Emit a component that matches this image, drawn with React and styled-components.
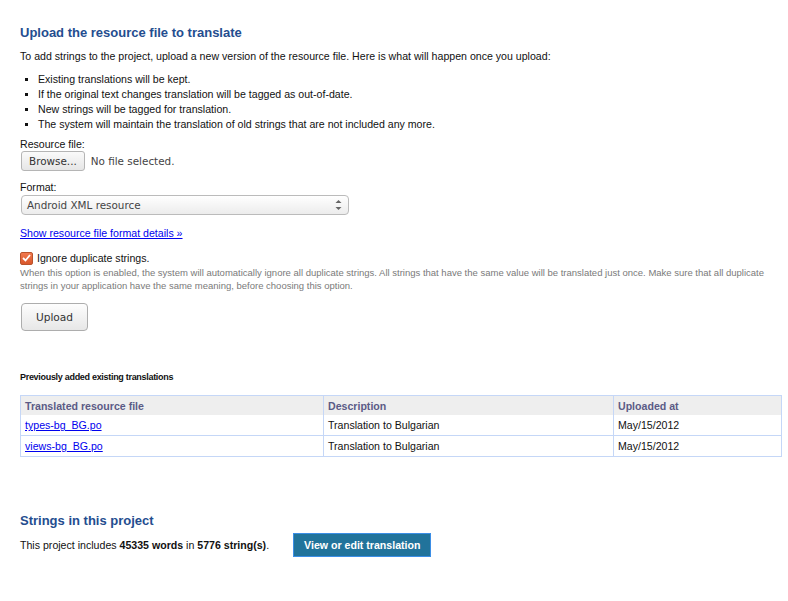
import React from 'react';
import styled, { createGlobalStyle } from 'styled-components';

const GlobalStyle = createGlobalStyle`
  body {
    margin: 0;
    background: #fff;
    font-family: "Liberation Sans", Arial, sans-serif;
    font-size: 10.6px;
    color: #111;
  }
`;

const rows = [
  { file: 'types-bg_BG.po', description: 'Translation to Bulgarian', date: 'May/15/2012' },
  { file: 'views-bg_BG.po', description: 'Translation to Bulgarian', date: 'May/15/2012' },
];

export default function App() {
  return (
    <Page>
      <GlobalStyle />
      <H2>Upload the resource file to translate</H2>
      <Intro>
        To add strings to the project, upload a new version of the resource file. Here is what will happen once you upload:
      </Intro>
      <List>
        <li>Existing translations will be kept.</li>
        <li>If the original text changes translation will be tagged as out-of-date.</li>
        <li>New strings will be tagged for translation.</li>
        <li>The system will maintain the translation of old strings that are not included any more.</li>
      </List>

      <Field>
        <Label>Resource file:</Label>
        <FileRow>
          <SmallButton>Browse...</SmallButton>
          <FileName>No file selected.</FileName>
        </FileRow>
      </Field>

      <Field>
        <Label>Format:</Label>
        <Select>
          <span>Android XML resource</span>
          <Arrows>
            <svg width="7" height="12" viewBox="0 0 7 12">
              <path d="M0.5 4 L3.5 1 L6.5 4 Z" fill="#666" />
              <path d="M0.5 8 L3.5 11 L6.5 8 Z" fill="#666" />
            </svg>
          </Arrows>
        </Select>
      </Field>

      <DetailsLink href="#">Show resource file format details »</DetailsLink>

      <CheckRow>
        <CheckBox>
          <svg width="9" height="8" viewBox="0 0 9 8">
            <path d="M1 4 L3.5 6.5 L8 1" stroke="#fff" strokeWidth="1.8" fill="none" />
          </svg>
        </CheckBox>
        <span>Ignore duplicate strings.</span>
      </CheckRow>
      <Help>
        When this option is enabled, the system will automatically ignore all duplicate strings. All strings that have the same value will be translated just once. Make sure that all duplicate strings in your application have the same meaning, before choosing this option.
      </Help>

      <UploadButton>Upload</UploadButton>

      <H4>Previously added existing translations</H4>
      <Table>
        <colgroup>
          <col style={{ width: 303 }} />
          <col style={{ width: 290 }} />
          <col />
        </colgroup>
        <thead>
          <tr>
            <Th>Translated resource file</Th>
            <Th>Description</Th>
            <Th>Uploaded at</Th>
          </tr>
        </thead>
        <tbody>
          {rows.map(r => (
            <tr key={r.file}>
              <Td><FileLink href="#">{r.file}</FileLink></Td>
              <Td>{r.description}</Td>
              <Td>{r.date}</Td>
            </tr>
          ))}
        </tbody>
      </Table>

      <H2 $top={55}>Strings in this project</H2>
      <SummaryRow>
        <span>
          This project includes <b>45335 words</b> in <b>5776 string(s)</b>.
        </span>
        <PrimaryButton>View or edit translation</PrimaryButton>
      </SummaryRow>
    </Page>
  );
}

const Page = styled.div`
  padding: 24px 0 40px 20px;
`;

const H2 = styled.h2`
  margin: ${p => p.$top || 0}px 0 0;
  color: #244d8f;
  font-size: 13px;
  font-weight: bold;
  line-height: 18px;
`;

const Intro = styled.p`
  margin: 7px 0 0;
  line-height: 14px;
`;

const List = styled.ul`
  margin: 9px 0 0;
  padding: 0 0 0 18px;
  list-style: square;
  line-height: 15px;

  li::marker {
    font-size: 10px;
  }
`;

const Field = styled.div`
  margin-top: 6px;
  & + & {
    margin-top: 10px;
  }
`;

const Label = styled.div`
  line-height: 13px;
`;

const FileRow = styled.div`
  display: flex;
  align-items: center;
  gap: 6px;
`;

const SmallButton = styled.button`
  margin: 0 0 0 1px;
  height: 20px;
  padding: 0 7px;
  border: 1px solid #b5b5b5;
  border-radius: 3px;
  background: linear-gradient(#fafafa, #e6e6e6);
  font-family: "DejaVu Sans", sans-serif;
  font-size: 10.4px;
  color: #333;
`;

const FileName = styled.span`
  font-family: "DejaVu Sans", sans-serif;
  font-size: 10.4px;
  color: #444;
`;

const Select = styled.div`
  margin: 1px 0 0 1px;
  width: 328px;
  height: 20px;
  box-sizing: border-box;
  display: flex;
  align-items: center;
  justify-content: space-between;
  padding: 0 6px 0 5px;
  border: 1px solid #bbb;
  border-radius: 4px;
  background: linear-gradient(#fff, #ececec);
  font-family: "DejaVu Sans", sans-serif;
  font-size: 10.4px;
  color: #444;
`;

const Arrows = styled.span`
  display: flex;
  align-items: center;
`;

const DetailsLink = styled.a`
  display: inline-block;
  margin-top: 11px;
  color: #0000ee;
  line-height: 14px;
`;

const CheckRow = styled.div`
  display: flex;
  align-items: center;
  gap: 4px;
  margin-top: 11px;
  line-height: 14px;
`;

const CheckBox = styled.span`
  width: 13px;
  height: 13px;
  box-sizing: border-box;
  display: inline-flex;
  align-items: center;
  justify-content: center;
  border-radius: 2px;
  background: linear-gradient(#f2794e, #d8572b);
  border: 1px solid #b9532c;
`;

const Help = styled.p`
  margin: 1px 0 0;
  color: #7a7a7a;
  font-size: 9.5px;
  line-height: 13px;
  max-width: 766px;
`;

const UploadButton = styled.button`
  display: block;
  margin: 11px 0 0 1px;
  width: 67px;
  height: 28px;
  border: 1px solid #adadad;
  border-radius: 4px;
  background: linear-gradient(#fdfdfd, #e7e7e7);
  font-family: "DejaVu Sans", sans-serif;
  font-size: 10.6px;
  color: #333;
`;

const H4 = styled.h4`
  margin: 40px 0 0;
  font-size: 9px;
  font-weight: bold;
  letter-spacing: -0.3px;
  line-height: 12px;
`;

const Table = styled.table`
  margin-top: 12px;
  width: 762px;
  border-collapse: collapse;
  table-layout: fixed;
  border: 1px solid #c5d7f7;

  tbody tr:first-child td {
    border-top: none;
  }
`;

const Th = styled.th`
  height: 19px;
  padding: 0 4px;
  background: #eeeeee;
  color: #5b5b86;
  text-align: left;
  font-weight: bold;
  border-left: 1px solid #c5d7f7;
`;

const Td = styled.td`
  height: 20px;
  padding: 0 4px;
  border: 1px solid #c5d7f7;
`;

const FileLink = styled.a`
  color: #0000ee;
`;

const SummaryRow = styled.div`
  display: flex;
  align-items: center;
  gap: 24px;
  margin-top: 3px;
`;

const PrimaryButton = styled.button`
  height: 24px;
  padding: 0 10px;
  border: 1px solid #3b8ee6;
  background: #21739b;
  color: #fff;
  font-family: "Liberation Sans", Arial, sans-serif;
  font-weight: bold;
  font-size: 10.6px;
`;
